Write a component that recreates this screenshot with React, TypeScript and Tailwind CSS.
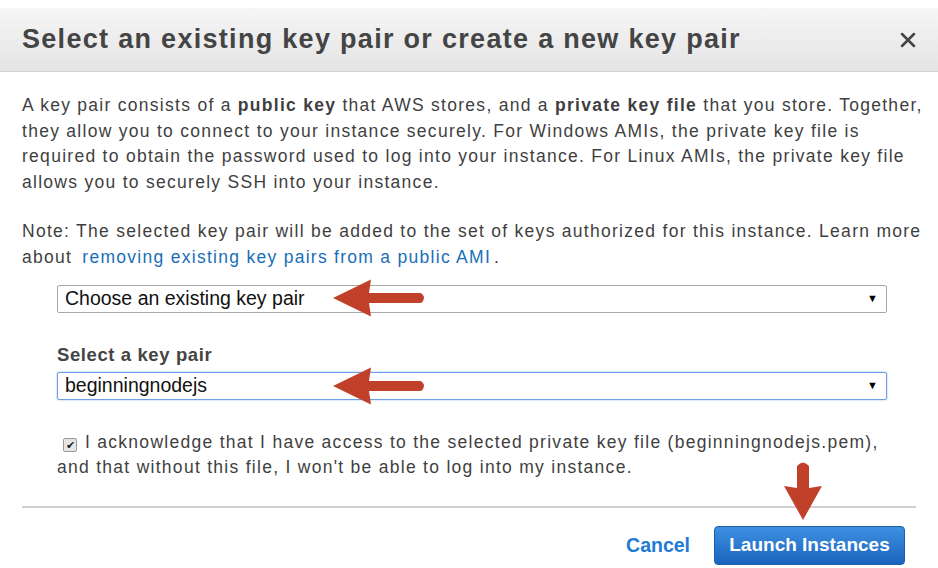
import { X } from 'lucide-react';

function Arrow({ className = '' }: { className?: string }) {
  // red pointer arrow pointing left
  return (
    <svg width="94" height="40" viewBox="0 0 94 40" className={className}>
      <path d="M0 20 L38 1.5 L36 15 L88 15 Q94 20 88 25 L36 25 L38 38.5 Z" fill="#c1402a" />
    </svg>
  );
}

function DownArrow({ className = '' }: { className?: string }) {
  return (
    <svg width="40" height="60" viewBox="0 0 40 60" className={className}>
      <path d="M20 60 L1 26 L14 28 L14 6 Q20 -1 26 6 L26 28 L39 26 Z" fill="#c1402a" />
    </svg>
  );
}

function FakeSelect({ value, focused }: { value: string; focused?: boolean }) {
  return (
    <div
      className={`flex h-[28px] items-center justify-between rounded-[2px] border bg-white pl-[7px] pr-[8px] text-[19.5px] tracking-normal text-[#111] ${
        focused ? 'border-[#6e9ee6] shadow-[0_0_2px_#8fb4ee]' : 'border-[#a9a9a9]'
      }`}
    >
      <span>{value}</span>
      <span className="text-[11px] text-black">▼</span>
    </div>
  );
}

export default function App() {
  return (
    <div className="relative h-[568px] w-[938px] overflow-hidden bg-white font-['Liberation_Sans',Arial,sans-serif] text-[#3f3f3f]">
      {/* Header */}
      <div className="mt-[8px] flex h-[64px] items-center justify-between border-b border-[#d4d4d4] bg-gradient-to-b from-[#f6f6f6] to-[#e4e4e4] pl-[22px] pr-[18px]">
        <h1 className="text-[27px] font-bold tracking-[1.3px] text-[#444]">
          Select an existing key pair or create a new key pair
        </h1>
        <X className="h-[24px] w-[24px] text-[#444]" strokeWidth={2.5} />
      </div>

      <div className="whitespace-nowrap px-[22px] pt-[21px] text-[17.5px] leading-[25.5px] tracking-[1.28px]">
        <p>
          A key pair consists of a <b>public key</b> that AWS stores, and a <b>private key file</b> that you store. Together,
          <br />
          they allow you to connect to your instance securely. For Windows AMIs, the private key file is
          <br />
          required to obtain the password used to log into your instance. For Linux AMIs, the private key file
          <br />
          allows you to securely SSH into your instance.
        </p>
        <p className="mt-[24px]">
          Note: The selected key pair will be added to the set of keys authorized for this instance. Learn more
          <br />
          about <a className="ml-[4px] mr-[3px] text-[#1a6fb7]">removing existing key pairs from a public AMI</a>.
        </p>

        <div className="ml-[35px] mr-[29px] mt-[15px]">
          <div className="relative">
            <FakeSelect value="Choose an existing key pair" />
            <Arrow className="absolute left-[276px] top-[-7px]" />
          </div>

          <div className="mt-[31px] text-[18.5px] font-bold leading-[22px] tracking-[0.6px] text-[#444]">
            Select a key pair
          </div>
          <div className="relative mt-[6px]">
            <FakeSelect value="beginningnodejs" focused />
            <Arrow className="absolute left-[276px] top-[-6px]" />
          </div>

          <div className="mt-[30px] leading-[25px]">
            <span className="mr-[8px] ml-[6px] inline-block h-[14px] w-[14px] translate-y-[1px] rounded-[2px] border border-[#9a9a9a] bg-[#e6e6e6] text-center align-baseline text-[11px] leading-[12px] tracking-normal text-[#222]">
              ✔
            </span>
            I acknowledge that I have access to the selected private key file (beginningnodejs.pem),
            <br />
            and that without this file, I won't be able to log into my instance.
          </div>
        </div>
      </div>

      <div className="mx-[22px] mt-[26px] border-t-2 border-[#d0d0d0]" />

      <div className="flex items-center justify-end gap-[24px] pr-[33px] pt-[18px]">
        <a className="text-[19.5px] font-bold text-[#1f7ad4]">Cancel</a>
        <button className="h-[39px] w-[191px] rounded-[4px] border border-[#1b5fa8] bg-gradient-to-b from-[#3d90e2] to-[#1b64bd] text-[19px] font-bold text-white">
          Launch Instances
        </button>
      </div>

      <DownArrow className="absolute left-[783px] top-[460px]" />
    </div>
  );
}
